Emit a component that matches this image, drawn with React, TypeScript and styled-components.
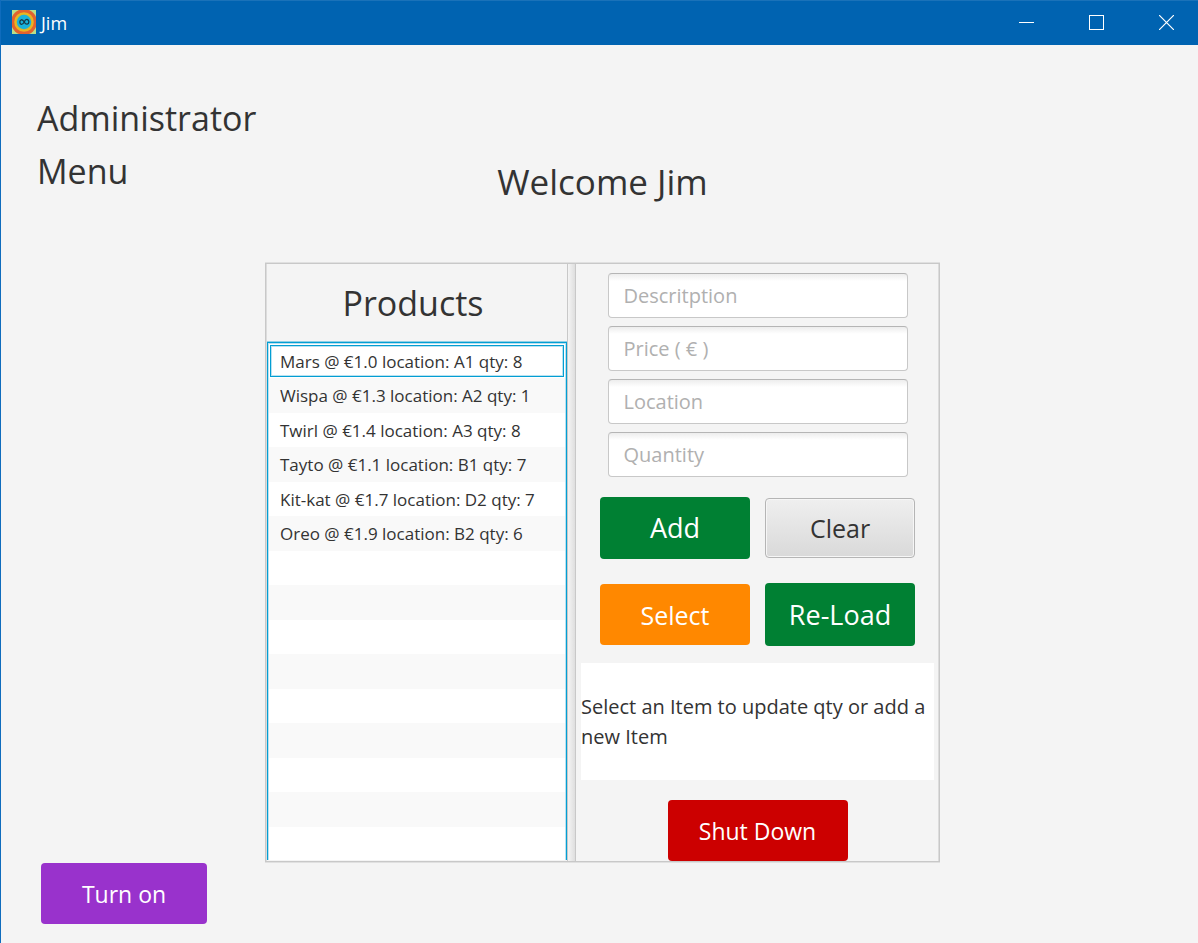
import React from 'react';
import styled, { createGlobalStyle } from 'styled-components';

const GlobalStyle = createGlobalStyle`
  * { box-sizing: border-box; }
  body {
    margin: 0;
    background: #f4f4f4;
    color: #333333;
    font-family: "Open Sans", "Noto Sans", sans-serif;
  }
  button, input { font-family: inherit; }
`;

const Window = styled.div`
  display: flex;
  flex-direction: column;
  min-height: 100vh;
  border-left: 1px solid #0f6cbd;
`;

const TitleBar = styled.header`
  display: flex;
  align-items: center;
  height: 45px;
  padding: 0 0 2px 11px;
  background: #0063b1;
  border-top: 1px solid #1a72b9;
  color: #ffffff;
`;

const AppTitle = styled.span`
  flex: 1;
  padding-top: 2px;
  margin-left: 5px;
  font-size: 18px;
  line-height: 24px;
`;

const CaptionButton = styled.button`
  display: flex;
  align-items: center;
  justify-content: center;
  width: 70px;
  height: 42px;
  padding: 0 0 0 6px;
  border: 0;
  background: transparent;
`;

const Body = styled.div`
  flex: 1;
  display: grid;
  grid-template-columns: minmax(0, 264fr) minmax(0, 675fr) minmax(0, 258fr);
`;

const Side = styled.aside`
  display: flex;
  flex-direction: column;
  justify-content: space-between;
  align-items: flex-start;
  padding: 47px 0 19px 36px;
`;

const MenuHeading = styled.h2`
  margin: 0;
  font-size: 34px;
  font-weight: 400;
  line-height: 53px;
`;

const PowerRow = styled.div`
  padding-left: 4px;
`;

const Content = styled.main`
  display: flex;
  flex-direction: column;
  padding-top: 110px;
`;

const Welcome = styled.h1`
  margin: 0 0 54px;
  font-size: 35px;
  font-weight: 400;
  line-height: 54px;
  text-align: center;
`;

const SplitPane = styled.div`
  display: grid;
  grid-template-columns: minmax(0, 301fr) 9px minmax(0, 363fr);
  border: 1px solid #c8c8c8;
  box-shadow: 0 -1px 0 #e0e0e0, 0 1px 0 #e0e0e0, inset 1px 0 0 #dcdcdc, inset -1px 0 0 #dcdcdc;
`;

const ListPane = styled.section`
  display: flex;
  flex-direction: column;
  padding: 0 0 1px 1px;
`;

const ListHeading = styled.h2`
  margin: 0;
  padding: 12px 8px 12px 0;
  font-size: 34px;
  font-weight: 400;
  line-height: 54px;
  text-align: center;
`;

const ProductList = styled.ul`
  flex: 1 1 0;
  overflow: hidden;
  margin: 0;
  padding: 1px 1px 0;
  list-style: none;
  background: #ffffff;
  border: 1px solid #039ed3;
  border-width: 1px 1px 0;
  box-shadow: 0 -1px 0 #8fd0e6, inset 1px 1px 0 #b8e2f1, inset -1px 0 0 #b8e2f1;
`;

const ProductRow = styled.li<{ $focused?: boolean }>`
  height: ${(p) => (p.$focused ? '32px' : '34px')};
  margin: ${(p) => (p.$focused ? '1px' : '0')};
  padding: 0 ${(p) => (p.$focused ? '9px' : '11px')};
  border: ${(p) => (p.$focused ? '1px solid #039ed3' : '0')};
  box-shadow: ${(p) => (p.$focused ? 'inset 0 0 0 1px #b8e2f1' : 'none')};
  font-size: 17px;
  line-height: ${(p) => (p.$focused ? '31px' : '35px')};
  white-space: nowrap;
  &:nth-child(even) {
    height: 35px;
    background: #f9f9f9;
  }
`;

const Divider = styled.div`
  border: 1px solid #c8c8c8;
  border-width: 0 1px;
  background: linear-gradient(to right, #f4f4f4, #dedede);
`;

const FormPane = styled.section`
  display: flex;
  flex-direction: column;
  align-items: center;
  padding: 9px 5px 0;
`;

const Fields = styled.form`
  display: flex;
  flex-direction: column;
  gap: 8px;
  width: 300px;
  margin-bottom: 20px;
`;

const Field = styled.input`
  width: 100%;
  height: 45px;
  padding: 0 15px;
  border: 1px solid #c8c8c8;
  border-top-color: #b5b5b5;
  border-radius: 4px;
  outline: 0;
  background: linear-gradient(#ededed, #ffffff 7px);
  color: #333333;
  font-size: 20px;
  &::placeholder { color: #b0b0b0; opacity: 1; }
`;

const Actions = styled.div`
  display: grid;
  grid-template-columns: 150px 150px;
  align-items: center;
  gap: 24px 15px;
  margin-bottom: 17px;
`;

const PushButton = styled.button<{ $fill: string; $width: number; $text: number; $height?: number }>`
  width: ${(p) => p.$width}px;
  height: ${(p) => p.$height ?? 61}px;
  padding: 0;
  border: 0;
  border-radius: 4px;
  background: ${(p) => p.$fill};
  color: #ffffff;
  font-size: ${(p) => p.$text}px;
  line-height: 36px;
`;

const ClearButton = styled(PushButton)`
  border: 1px solid #b5b5b5;
  box-shadow: inset 0 0 0 1px #f6f6f6;
  color: #333333;
`;

const Message = styled.p`
  align-self: stretch;
  display: flex;
  align-items: center;
  min-height: 117px;
  margin: 0 0 20px;
  background: #ffffff;
  font-size: 20px;
  line-height: 30px;
`;

const products = [
  'Mars @ €1.0 location: A1 qty: 8',
  'Wispa @ €1.3 location: A2 qty: 1',
  'Twirl @ €1.4 location: A3 qty: 8',
  'Tayto @ €1.1 location: B1 qty: 7',
  'Kit-kat @ €1.7 location: D2 qty: 7',
  'Oreo @ €1.9 location: B2 qty: 6',
];
const emptyRows = Array.from({ length: 9 }, (_, i) => i);
const fields = ['Descritption', 'Price ( € )', 'Location', 'Quantity'];

function AppLogo() {
  return (
    <svg width="24" height="24" viewBox="0 0 24 24" aria-hidden="true">
      <rect width="24" height="24" fill="#b9e08a" />
      <circle cx="12" cy="12" r="13" fill="#e2622f" />
      <circle cx="12" cy="12" r="9.8" fill="#e9b520" />
      <circle cx="12" cy="12" r="7.8" fill="#c9b63c" />
      <circle cx="12" cy="12" r="7.2" fill="#19b2dc" />
      <path
        d="M12.2 12C11 9.8 10 9.6 9.2 9.8C7.4 10.2 7.4 13.8 9.2 14.3C10.6 14.6 11.6 13.2 12.2 12C13 10 14 9.3 15.2 9.5C17.4 9.9 17.4 13.8 15.2 14.2C13.8 14.4 13 13.4 12.2 12Z"
        fill="none"
        stroke="#173848"
        strokeWidth="1.3"
      />
    </svg>
  );
}

export default function App() {
  return (
    <>
      <GlobalStyle />
      <Window>
        <TitleBar>
          <AppLogo />
          <AppTitle>Jim</AppTitle>
          <CaptionButton aria-label="Minimize">
            <svg width="15" height="15" shapeRendering="crispEdges">
              <path d="M0 7.5H15" stroke="#fff" />
            </svg>
          </CaptionButton>
          <CaptionButton aria-label="Maximize">
            <svg width="15" height="15" shapeRendering="crispEdges">
              <rect x="0.5" y="0.5" width="14" height="14" fill="none" stroke="#fff" />
            </svg>
          </CaptionButton>
          <CaptionButton aria-label="Close">
            <svg width="15" height="15">
              <path d="M0 0L15 15M15 0L0 15" stroke="#fff" strokeWidth="1.2" />
            </svg>
          </CaptionButton>
        </TitleBar>
        <Body>
          <Side>
            <MenuHeading>
              Administrator
              <br />
              Menu
            </MenuHeading>
            <PowerRow>
              <PushButton $fill="#9932cc" $width={166} $text={23}>Turn on</PushButton>
            </PowerRow>
          </Side>
          <Content>
            <Welcome>Welcome Jim</Welcome>
            <SplitPane>
              <ListPane>
                <ListHeading>Products</ListHeading>
                <ProductList>
                  {products.map((p, i) => (
                    <ProductRow key={p} $focused={i === 0}>{p}</ProductRow>
                  ))}
                  {emptyRows.map((i) => (
                    <ProductRow key={i} />
                  ))}
                </ProductList>
              </ListPane>
              <Divider />
              <FormPane>
                <Fields>
                  {fields.map((f) => (
                    <Field key={f} type="text" placeholder={f} aria-label={f} />
                  ))}
                </Fields>
                <Actions>
                  <PushButton $fill="#008033" $width={150} $height={62} $text={27}>Add</PushButton>
                  <ClearButton $fill="linear-gradient(#efefef, #d9d9d9)" $width={150} $height={60} $text={25}>
                    Clear
                  </ClearButton>
                  <PushButton $fill="#ff8800" $width={150} $text={25}>Select</PushButton>
                  <PushButton $fill="#008033" $width={150} $height={63} $text={27}>Re-Load</PushButton>
                </Actions>
                <Message>Select an Item to update qty or add a new Item</Message>
                <PushButton $fill="#cc0000" $width={180} $text={23}>Shut Down</PushButton>
              </FormPane>
            </SplitPane>
          </Content>
        </Body>
      </Window>
    </>
  );
}
